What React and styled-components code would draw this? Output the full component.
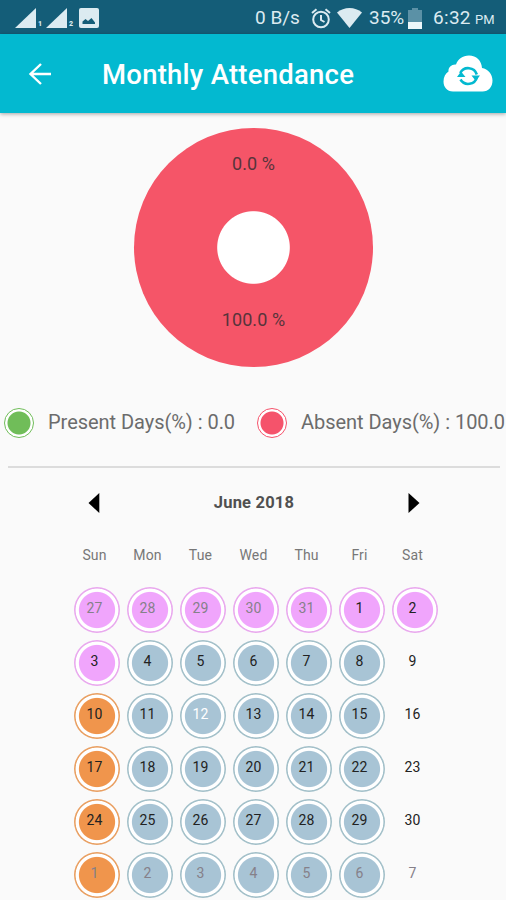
import React from 'react';
import styled, { createGlobalStyle } from 'styled-components';

const GlobalStyle = createGlobalStyle`
  * {
    box-sizing: border-box;
  }

  body {
    margin: 0;
    background: #fafafa;
    font-family: Roboto, sans-serif;
    overflow: hidden;
  }

  svg {
    display: block;
    flex: none;
  }
`;

const colors = {
  holiday: { fill: '#f0a5fc', ring: '#e9a9ee' },
  absent: { fill: '#a8c4d5', ring: '#a3c0c9' },
  weekend: { fill: '#f0954c', ring: '#e9a063' },
};

const weekdays = ['Sun', 'Mon', 'Tue', 'Wed', 'Thu', 'Fri', 'Sat'];

// One entry per week: day numbers and the type of each day
const weeks = [
  { days: [27, 28, 29, 30, 31, 1, 2], types: Array(7).fill('holiday'), muted: [0, 1, 2, 3, 4] },
  { days: [3, 4, 5, 6, 7, 8, 9], types: ['holiday', ...Array(5).fill('absent')] },
  { days: [10, 11, 12, 13, 14, 15, 16], types: ['weekend', ...Array(5).fill('absent')] },
  { days: [17, 18, 19, 20, 21, 22, 23], types: ['weekend', ...Array(5).fill('absent')] },
  { days: [24, 25, 26, 27, 28, 29, 30], types: ['weekend', ...Array(5).fill('absent')] },
  { days: [1, 2, 3, 4, 5, 6, 7], types: ['weekend', ...Array(5).fill('absent')], muted: [0, 1, 2, 3, 4, 5, 6] },
];

const Screen = styled.div`
  width: 506px;
  height: 900px;
  overflow: hidden;
  background: #fafafa;
`;

const StatusBar = styled.div`
  display: flex;
  align-items: center;
  height: 34px;
  padding: 2px 10px 0 15px;
  background: #145d78;
  color: #dcebf1;
`;

const StatusText = styled.span`
  width: ${(p) => p.$width}px;
  margin-left: ${(p) => p.$gap || 0}px;
  padding-top: ${(p) => p.$drop || 0}px;
  font-size: ${(p) => p.$size || 19}px;
  line-height: 22px;
  letter-spacing: ${(p) => p.$spacing || 0}px;
  white-space: nowrap;
`;

const SignalLabel = styled.span`
  width: 10px;
  padding: 12px 0 0 2px;
  font-size: 7px;
  font-weight: 900;
  line-height: 8px;
`;

const StatusGroup = styled.div`
  display: flex;
  align-items: center;
  margin-left: ${(p) => (p.$end ? 'auto' : '0')};
`;

const AppBar = styled.header`
  display: flex;
  align-items: center;
  height: 79px;
  padding: 0 13px 0 24px;
  background: #03b9d0;
  box-shadow: 0 1px 4px rgba(0, 0, 0, 0.35);
`;

const Title = styled.h1`
  flex: 1;
  margin: 2px 0 0 46px;
  color: #fff;
  font-size: 27.5px;
  font-weight: 500;
  line-height: 32px;
  letter-spacing: 0.24px;
  white-space: nowrap;
`;

const ChartArea = styled.section`
  display: flex;
  justify-content: center;
  height: 276px;
  padding: 15px 0 0 1px;
`;

const Donut = styled.div`
  display: flex;
  flex-direction: column;
  align-items: center;
  justify-content: space-between;
  width: 239px;
  height: 239px;
  padding: 25px 0 36px;
  border-radius: 50%;
  background: radial-gradient(circle, #fff 35.8px, #f55568 36.8px);
`;

const DonutLabel = styled.span`
  color: #57343b;
  font-size: 18px;
  line-height: 22px;
  letter-spacing: 0.1px;
`;

const Legend = styled.div`
  display: grid;
  grid-template-columns: 253px 253px;
  height: 67px;
  padding-top: 18px;
`;

const LegendItem = styled.div`
  display: flex;
  align-items: center;
  height: 31px;
  padding-left: 4px;
`;

const LegendDot = styled.span`
  flex: none;
  width: 30px;
  height: 30px;
  border: 1.5px solid ${(p) => p.$color};
  border-radius: 50%;
  background: radial-gradient(circle, ${(p) => p.$color} 11px, #fff 12px);
`;

const LegendText = styled.span`
  margin: -2px 0 0 14px;
  color: #6c6c6c;
  font-size: 20px;
  line-height: 24px;
  letter-spacing: -0.04px;
  white-space: nowrap;
`;

const Divider = styled.hr`
  height: 2px;
  margin: 10px 6px 0 8px;
  border: 0;
  background: #dcdcdc;
`;

const MonthBar = styled.div`
  display: flex;
  align-items: center;
  justify-content: space-between;
  height: 69px;
  padding: 0 86px 0 88px;
`;

const MonthName = styled.span`
  color: #505050;
  font-size: 16.5px;
  font-weight: 700;
  letter-spacing: 0.2px;
`;

const CalendarGrid = styled.div`
  display: grid;
  grid-template-columns: repeat(7, 53px);
  margin-left: 68px;
`;

const Weekday = styled.span`
  height: 45px;
  padding-top: 9px;
  color: #777;
  font-size: 14px;
  line-height: 18px;
  letter-spacing: 0.15px;
  text-align: center;
`;

const DayCell = styled.div`
  position: relative;
  display: flex;
  align-items: center;
  justify-content: center;
  height: 53px;
`;

// The marker sits behind the number, slightly off its centre
const DayMarker = styled.span`
  position: absolute;
  top: 4.5px;
  left: 5.5px;
  width: 46.5px;
  height: 46.5px;
  border-radius: 50%;
  background: radial-gradient(
    circle,
    ${(p) => colors[p.$type].fill} 17.6px,
    #fff 18.6px,
    #fff 21px,
    ${(p) => colors[p.$type].ring} 21.8px
  );
`;

const DayNumber = styled.span`
  position: relative;
  margin-top: -1px;
  color: ${(p) => p.$color};
  font-size: 14px;
  line-height: 18px;
  letter-spacing: 0.2px;
`;

const SignalIcon = () => (
  <svg width="21" height="20" viewBox="0 0 21 20">
    <path d="M0 20 21 0v20z" fill="#dcebf1" />
  </svg>
);

const PictureIcon = () => (
  <svg width="20" height="20" viewBox="0 0 20 20">
    <rect width="20" height="20" rx="2" fill="#dcebf1" />
    <path d="M3.500 16v-2.500l3-2.500 2.500 2 3.500-3 3.500 4.500V16z" fill="#145d78" />
  </svg>
);

const AlarmIcon = () => (
  <svg width="20" height="21" viewBox="0 0 20 21" fill="none" stroke="#dcebf1" strokeWidth="2">
    <circle cx="10" cy="11.5" r="7.8" />
    <path d="M10 7v5l3.5 2M1 5l4.5-3.8M19 5l-4.5-3.8" />
  </svg>
);

const WifiIcon = () => (
  <svg width="25" height="20" viewBox="0 0 25 20">
    <path d="M0 4.5C7-1.5 18-1.5 25 4.5L12.5 20z" fill="#dcebf1" />
  </svg>
);

const BatteryIcon = () => (
  <svg width="14" height="21" viewBox="0 0 14 21">
    <path d="M4 0h6v2h4v19H0V2h4z" fill="#5b91a6" />
    <path d="M0 14h14v7H0z" fill="#edf7fa" />
  </svg>
);

const BackIcon = () => (
  <svg width="32" height="24" viewBox="0 0 32 24" fill="none" stroke="#fff" strokeWidth="2.4">
    <path d="M27 12H6.5M17 2 6.5 12 17 22" />
  </svg>
);

const CloudSyncIcon = () => (
  <svg width="50" height="37" viewBox="0 0 50 37">
    <path
      d="M10 36.5C4 36.5.5 32 .5 26.500c0-4.500 2-8 5-10C5 12 9 9 13 9.500 15 4 19.500.5 26 .5c7.500 0 12.500 5 13 12.500 6 1 10.500 6 10.500 12.500 0 6.500-4 11-10 11z"
      fill="#fff"
    />
    <g fill="none" stroke="#03b9d0" strokeWidth="2.6">
      <path d="M17.200 18.500A9 9 0 0 1 33.800 20M34 22.500A9 9 0 0 1 17.500 25" transform="translate(0 -.5)" />
    </g>
    <path d="m14 22 4-5.500 4.500 5.500zM28.500 20.500h8.500l-4.200 5.500z" fill="#03b9d0" />
  </svg>
);

const ArrowButton = ({ direction }) => (
  <svg width="12" height="20" viewBox="0 0 12 20">
    <path d={direction === 'prev' ? 'M11.300 0v20L.5 10z' : 'M.5 0v20L11.500 10z'} fill="#000" />
  </svg>
);

// Today is white, days outside the month are grey
const numberColor = (week, index) => {
  if (week.days[index] === 12) return '#fff';
  return week.muted && week.muted.includes(index) ? '#858089' : '#222';
};

const Calendar = () => (
  <CalendarGrid>
    {weekdays.map((name) => (
      <Weekday key={name}>{name}</Weekday>
    ))}
    {weeks.map((week, row) =>
      week.days.map((day, i) => (
        <DayCell key={`${row}-${day}`}>
          {week.types[i] && <DayMarker $type={week.types[i]} />}
          <DayNumber $color={numberColor(week, i)}>{day}</DayNumber>
        </DayCell>
      ))
    )}
  </CalendarGrid>
);

const App = () => (
  <>
    <GlobalStyle />
    <Screen>
      <StatusBar>
        <StatusGroup>
          <SignalIcon />
          <SignalLabel>1</SignalLabel>
          <SignalIcon />
          <SignalLabel>2</SignalLabel>
          <StatusText $width={2} />
          <PictureIcon />
        </StatusGroup>
        <StatusGroup $end>
          <StatusText $width={56}>0 B/s</StatusText>
          <AlarmIcon />
          <StatusText $width={6} />
          <WifiIcon />
          <StatusText $width={39} $gap={7}>35%</StatusText>
          <BatteryIcon />
          <StatusText $width={42} $gap={11} $spacing={0.3}>6:32</StatusText>
          <StatusText $width={21} $size={13} $drop={3}>PM</StatusText>
        </StatusGroup>
      </StatusBar>
      <AppBar>
        <BackIcon />
        <Title>Monthly Attendance</Title>
        <CloudSyncIcon />
      </AppBar>
      <ChartArea>
        <Donut>
          <DonutLabel>0.0 %</DonutLabel>
          <DonutLabel>100.0 %</DonutLabel>
        </Donut>
      </ChartArea>
      <Legend>
        <LegendItem>
          <LegendDot $color="#70bd59" />
          <LegendText>Present Days(%) : 0.0</LegendText>
        </LegendItem>
        <LegendItem>
          <LegendDot $color="#f5536b" />
          <LegendText>Absent Days(%) : 100.0</LegendText>
        </LegendItem>
      </Legend>
      <Divider />
      <MonthBar>
        <ArrowButton direction="prev" />
        <MonthName>June 2018</MonthName>
        <ArrowButton direction="next" />
      </MonthBar>
      <Calendar />
    </Screen>
  </>
);

export default App;
